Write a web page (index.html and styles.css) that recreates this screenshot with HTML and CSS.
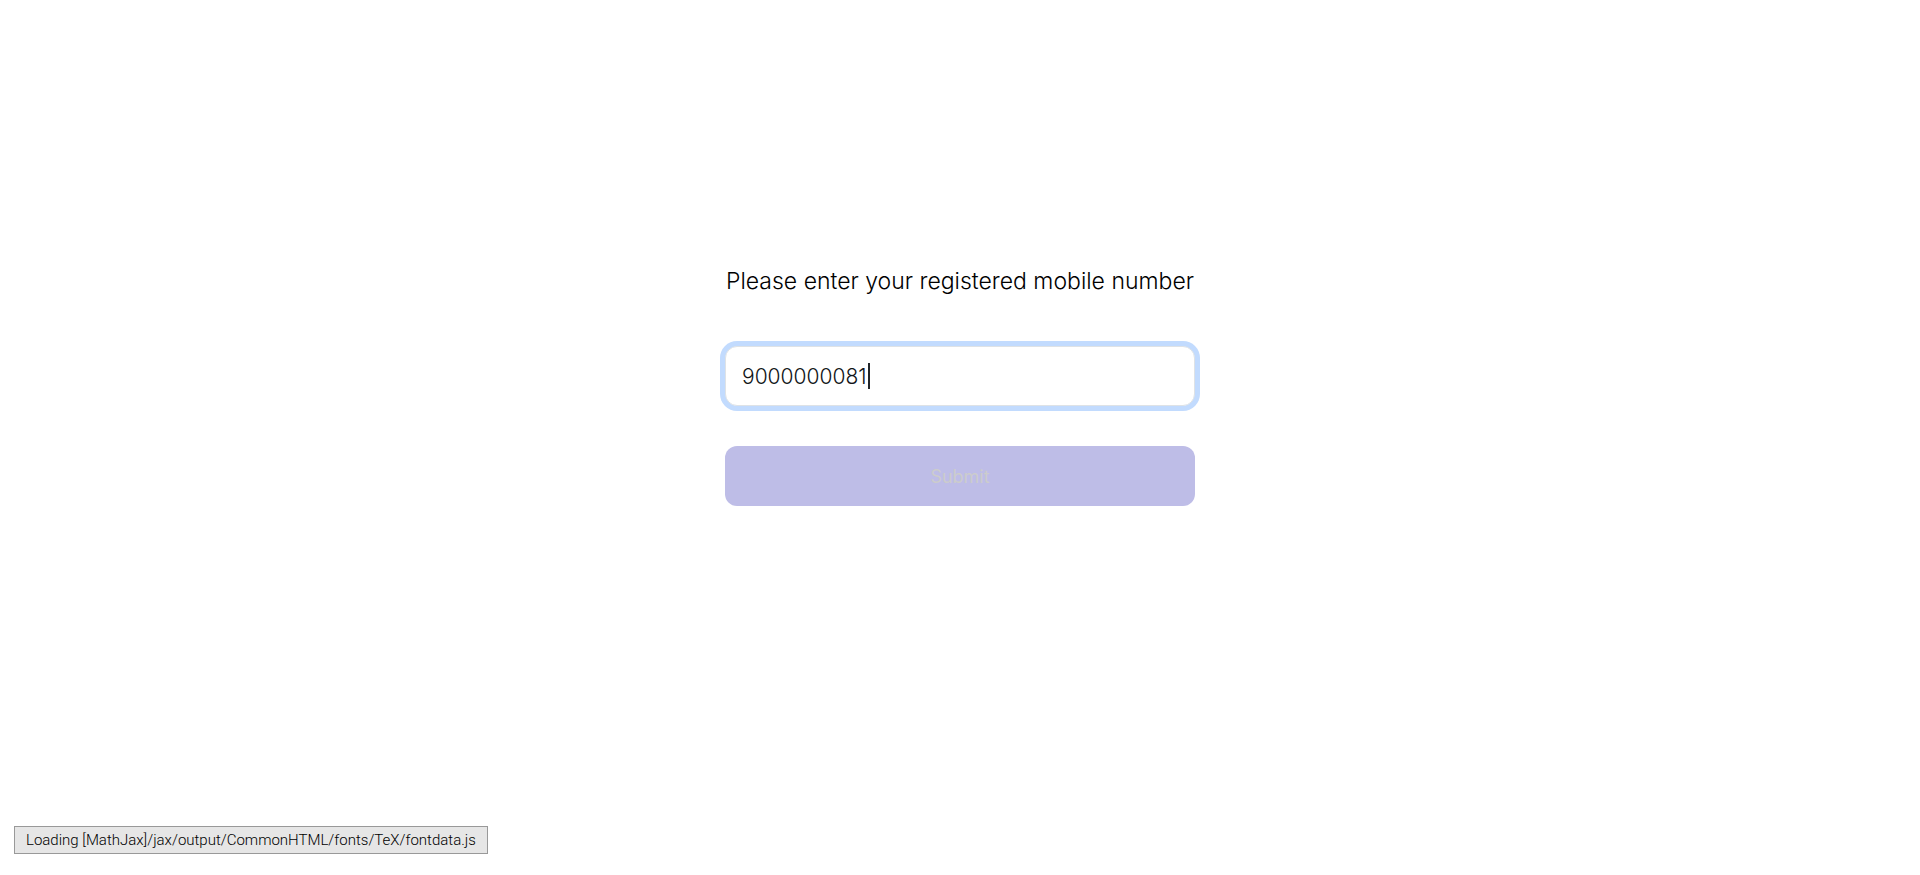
FILE: index.html
```html
<!DOCTYPE html>
<html lang="en">
<head>
<meta charset="utf-8">
<meta name="viewport" content="width=device-width, initial-scale=1">
<title>Sign in</title>
<link rel="stylesheet" href="styles.css">
</head>
<body>
<main class="page">
  <form class="login">
    <label class="login-title" for="mobile">Please enter your registered mobile number</label>
    <div class="field">
      <input class="field-input" id="mobile" type="tel" value="9000000081">
      <span class="field-caret" aria-hidden="true"></span>
    </div>
    <button class="submit" type="submit" disabled>Submit</button>
  </form>
</main>
<div class="status" role="status">Loading [MathJax]/jax/output/CommonHTML/fonts/TeX/fontdata.js</div>
</body>
</html>
```

FILE: styles.css
```css
* {
  box-sizing: border-box;
}

body {
  margin: 0;
  background: #fff;
  color: #000;
  font-family: Inter, "Liberation Sans", sans-serif;
}

.page {
  display: flex;
  justify-content: center;
  padding: 263px 16px 0;
}

.login {
  display: flex;
  flex-direction: column;
  width: 100%;
  max-width: 470px;
}

.login-title {
  margin-bottom: 47px;
  font-size: 23px;
  font-weight: 300;
  line-height: 36px;
  text-align: center;
}

.field {
  position: relative;
  margin-bottom: 40px;
}

.field-input {
  display: block;
  width: 100%;
  height: 60px;
  padding: 0 16px;
  border: 1px solid #dee2e6;
  border-radius: 12px;
  outline: none;
  box-shadow: 0 0 0 5px #c2dbfe;
  background: #fff;
  color: #111518;
  font: inherit;
  font-size: 21px;
  font-weight: 300;
}

.field-caret {
  position: absolute;
  top: 17px;
  left: 143px;
  width: 2px;
  height: 26px;
  background: #212529;
}

.submit {
  height: 60px;
  border: 0;
  border-radius: 12px;
  background: #bebde7;
  color: #ccc;
  font: inherit;
  font-size: 18px;
}

.status {
  position: fixed;
  bottom: 21px;
  left: 14px;
  padding: 4px 11px;
  border: 1px solid #999;
  background: #e6e6e6;
  font-family: Roboto, sans-serif;
  font-size: 15px;
  line-height: 18px;
  font-weight: 300;
}
```
